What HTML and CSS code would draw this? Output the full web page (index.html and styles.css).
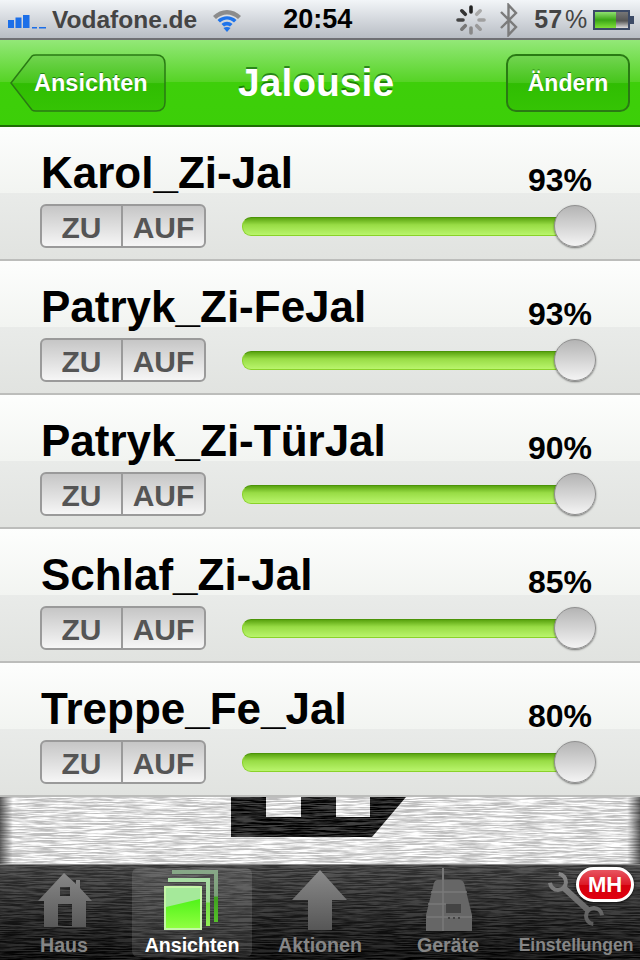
FILE: index.html
```html
<!DOCTYPE html>
<html>

<head>
  <meta charset="UTF-8">
  <meta name="viewport" content="width=device-width, initial-scale=1.0">
  <title>Jalousie</title>
  <link rel="stylesheet" href="styles.css">
</head>

<body>
  <svg class="defs" width="0" height="0">
    <defs>
      <filter id="grain" x="0" y="0" width="100%" height="100%" color-interpolation-filters="sRGB">
        <feTurbulence type="fractalNoise" baseFrequency="0.035 0.75" numOctaves="3" seed="7" />
        <feColorMatrix type="matrix" values="3.4 0 0 0 -1.2  3.4 0 0 0 -1.2  3.4 0 0 0 -1.2  0 0 0 0 1" />
      </filter>
      <linearGradient id="tabGray" gradientUnits="userSpaceOnUse" x1="0" y1="0" x2="0" y2="66">
        <stop offset="0" stop-color="#8f8f8f" />
        <stop offset="1" stop-color="#555" />
      </linearGradient>
      <linearGradient id="frontPage" x1="0" y1="0" x2="0" y2="1">
        <stop offset="0" stop-color="#38ee0a" />
        <stop offset="1" stop-color="#90ff40" />
      </linearGradient>
      <linearGradient id="backSide" x1="0" y1="0" x2="0" y2="1">
        <stop offset="0" stop-color="#88a888" />
        <stop offset="0.5" stop-color="#7a9f78" />
        <stop offset="0.52" stop-color="#3fa020" />
        <stop offset="1" stop-color="#55c02a" />
      </linearGradient>
      <linearGradient id="midSide" x1="0" y1="0" x2="0" y2="1">
        <stop offset="0" stop-color="#a8dba4" />
        <stop offset="0.5" stop-color="#a2dc98" />
        <stop offset="0.52" stop-color="#72e040" />
        <stop offset="1" stop-color="#90f055" />
      </linearGradient>
      <linearGradient id="batteryFill" x1="0" y1="0" x2="0" y2="1">
        <stop offset="0" stop-color="#8fe070" />
        <stop offset="0.5" stop-color="#3aa515" />
        <stop offset="1" stop-color="#7fe03a" />
      </linearGradient>
      <linearGradient id="batteryEmpty" x1="0" y1="0" x2="0" y2="1">
        <stop offset="0" stop-color="#777" />
        <stop offset="0.55" stop-color="#555" />
        <stop offset="1" stop-color="#ddd" />
      </linearGradient>
    </defs>
  </svg>

  <div id="statusBar">
    <svg class="signal" width="40" height="24" viewBox="0 0 40 24">
      <rect x="0" y="12" width="6" height="8" fill="#1c6fe8" />
      <rect x="7.5" y="9.5" width="6" height="10.5" fill="#1c6fe8" />
      <rect x="15" y="7" width="6.5" height="13" fill="#1c6fe8" />
      <rect x="24" y="19" width="5" height="1.5" fill="#1c6fe8" />
      <rect x="31" y="19" width="7" height="1.5" fill="#1c6fe8" />
    </svg>
    <span class="carrier">Vodafone.de</span>
    <svg class="wifi" width="32" height="26" viewBox="0 0 32 26">
      <path d="M2 9 C10 1 22 1 30 9 L27 12 C20 6 12 6 5 12 Z" fill="#8c8c8c" />
      <path d="M6.5 13 C12 8 20 8 25.5 13 L23 15.5 C18.5 11.5 13.5 11.5 9 15.5 Z" fill="#1f74ea" />
      <path d="M10.5 17 C14 14 18 14 21.5 17 L19 19.5 C17 18 15 18 13 19.5 Z" fill="#1f74ea" />
      <path d="M16 25 L12.5 21 C14.5 19.5 17.5 19.5 19.5 21 Z" fill="#1f74ea" />
    </svg>
    <span class="clock">20:54</span>
    <svg class="spinner" width="30" height="30" viewBox="-15 -15 30 30">
      <g stroke-width="3.6" stroke-linecap="round">
        <line x1="0" y1="-8" x2="0" y2="-13" stroke="#222" />
        <line x1="5.7" y1="-5.7" x2="9.2" y2="-9.2" stroke="#aaa" />
        <line x1="8" y1="0" x2="13" y2="0" stroke="#a0a0a0" />
        <line x1="5.7" y1="5.7" x2="9.2" y2="9.2" stroke="#999" />
        <line x1="0" y1="8" x2="0" y2="13" stroke="#888" />
        <line x1="-5.7" y1="5.7" x2="-9.2" y2="9.2" stroke="#777" />
        <line x1="-8" y1="0" x2="-13" y2="0" stroke="#444" />
        <line x1="-5.7" y1="-5.7" x2="-9.2" y2="-9.2" stroke="#333" />
      </g>
    </svg>
    <svg class="bluetooth" width="20" height="34" viewBox="0 0 20 34">
      <path d="M2 9 L17 24 L9.5 32 V2 L17 10 L2 25" fill="none" stroke="#7b7b7b" stroke-width="2.4" />
    </svg>
    <span class="battery-text">57<span class="percent">%</span></span>
    <svg class="battery" width="42" height="20" viewBox="0 0 42 20">
      <rect x="1" y="1" width="35" height="18" fill="#eee" stroke="#3c4a66" stroke-width="2" />
      <rect x="2" y="2" width="21" height="16" fill="url(#batteryFill)" />
      <rect x="23" y="2" width="12" height="16" fill="url(#batteryEmpty)" />
      <rect x="37" y="6" width="4" height="8" fill="#3c4a66" />
    </svg>
  </div>

  <div id="navBar">
    <a class="nav-back">
      <svg class="back-shape" width="156" height="58" viewBox="0 0 156 58">
        <defs>
          <linearGradient id="backFill" x1="0" y1="0" x2="0" y2="1">
            <stop offset="0" stop-color="#72d451" />
            <stop offset="0.5" stop-color="#45c51a" />
            <stop offset="0.51" stop-color="#30bd02" />
            <stop offset="1" stop-color="#35c404" />
          </linearGradient>
        </defs>
        <path d="M1 29 L22 2 Q23 1 26 1 H146 Q155 1 155 10 V48 Q155 57 146 57 H26 Q23 57 22 56 Z" fill="url(#backFill)" stroke="#2a7a14" stroke-width="1.5" />
      </svg>
      <span class="nav-back-label">Ansichten</span>
    </a>
    <h1 class="nav-title">Jalousie</h1>
    <a class="nav-button">Ändern</a>
  </div>

  <div class="blind-list">
    <div class="blind-row">
      <div class="blind-head">
        <span class="blind-name">Karol_Zi-Jal</span>
        <span class="blind-value">93%</span>
      </div>
      <div class="blind-controls">
        <div class="updown"><span class="updown-btn zu">ZU</span><span class="updown-btn auf">AUF</span></div>
        <div class="slider">
          <div class="slider-track"></div>
          <div class="slider-knob"></div>
        </div>
      </div>
    </div>
    <div class="blind-row">
      <div class="blind-head">
        <span class="blind-name">Patryk_Zi-FeJal</span>
        <span class="blind-value">93%</span>
      </div>
      <div class="blind-controls">
        <div class="updown"><span class="updown-btn zu">ZU</span><span class="updown-btn auf">AUF</span></div>
        <div class="slider">
          <div class="slider-track"></div>
          <div class="slider-knob"></div>
        </div>
      </div>
    </div>
    <div class="blind-row">
      <div class="blind-head">
        <span class="blind-name">Patryk_Zi-TürJal</span>
        <span class="blind-value">90%</span>
      </div>
      <div class="blind-controls">
        <div class="updown"><span class="updown-btn zu">ZU</span><span class="updown-btn auf">AUF</span></div>
        <div class="slider">
          <div class="slider-track"></div>
          <div class="slider-knob"></div>
        </div>
      </div>
    </div>
    <div class="blind-row">
      <div class="blind-head">
        <span class="blind-name">Schlaf_Zi-Jal</span>
        <span class="blind-value">85%</span>
      </div>
      <div class="blind-controls">
        <div class="updown"><span class="updown-btn zu">ZU</span><span class="updown-btn auf">AUF</span></div>
        <div class="slider">
          <div class="slider-track"></div>
          <div class="slider-knob"></div>
        </div>
      </div>
    </div>
    <div class="blind-row">
      <div class="blind-head">
        <span class="blind-name">Treppe_Fe_Jal</span>
        <span class="blind-value">80%</span>
      </div>
      <div class="blind-controls">
        <div class="updown"><span class="updown-btn zu">ZU</span><span class="updown-btn auf">AUF</span></div>
        <div class="slider">
          <div class="slider-track"></div>
          <div class="slider-knob"></div>
        </div>
      </div>
    </div>
  </div>

  <svg class="wall" width="640" height="67" viewBox="0 0 640 67">
    <defs>
      <linearGradient id="wallEdge">
        <stop offset="0" stop-color="#000" stop-opacity="0.6" />
        <stop offset="0.02" stop-color="#000" stop-opacity="0" />
        <stop offset="0.98" stop-color="#000" stop-opacity="0" />
        <stop offset="1" stop-color="#000" stop-opacity="0.6" />
      </linearGradient>
    </defs>
    <rect width="640" height="67" fill="#fff" />
    <path d="M231 0 H266 V20 H301 V0 H336 V20 H370 V0 H406 L372 40 H231 Z" fill="#000" />
    <rect width="640" height="67" filter="url(#grain)" opacity="0.25" />
    <rect width="640" height="67" fill="url(#wallEdge)" />
  </svg>

  <div id="tabBar">
    <svg class="tab-texture" width="640" height="96" viewBox="0 0 640 96">
      <defs>
        <linearGradient id="tabFade" x1="0" y1="0" x2="0" y2="1">
          <stop offset="0" stop-color="#3c3c3c" />
          <stop offset="1" stop-color="#000" />
        </linearGradient>
      </defs>
      <rect width="640" height="96" fill="url(#tabFade)" />
      <rect width="640" height="96" filter="url(#grain)" opacity="0.14" />
    </svg>
    <div class="tab">
      <svg class="tab-icon" width="128" height="66" viewBox="0 0 128 66">
        <path fill="url(#tabGray)" fill-rule="evenodd" d="M64 8 L76 19 V15 H80 V23 L92 36 H86 V62 H44 V36 H38 Z M60 22 V31 H70 V22 Z M58 39 V61 H72 V39 Z" />
      </svg>
      <span class="tab-label">Haus</span>
    </div>
    <div class="tab active">
      <svg class="tab-icon" width="128" height="66" viewBox="0 0 128 66">
        <path fill="url(#backSide)" d="M44 5 H90 V57 H86 V9 H44 Z" />
        <path fill="url(#midSide)" d="M40 13 H82 V61 H78 V17 H40 Z" />
        <rect x="36" y="21" width="38" height="44" fill="#c5f5a8" />
        <path fill="url(#frontPage)" d="M38 23 H72 V63 H38 Z" />
        <path fill="#a5e99a" d="M38 23 H72 V34 L38 42 Z" />
      </svg>
      <span class="tab-label">Ansichten</span>
    </div>
    <div class="tab">
      <svg class="tab-icon" width="128" height="66" viewBox="0 0 128 66">
        <path fill="url(#tabGray)" d="M64 5 L91 35 H76 V65 H52 V35 H36 Z" />
      </svg>
      <span class="tab-label">Aktionen</span>
    </div>
    <div class="tab">
      <svg class="tab-icon" width="128" height="66" viewBox="0 0 128 66">
        <rect x="58" y="3" width="2" height="14" fill="#777" />
        <path fill="#666" d="M53 15 H76 Q80 15 81 22 L88 50 V67 H42 V50 L49 22 Q50 15 53 15 Z" />
        <path d="M47 27 H83 M44 39 H62 M43 52 H88 M59 15 V67" stroke="#7a7a7a" stroke-width="1.5" fill="none" />
        <rect x="62" y="39" width="15" height="9" fill="#444" />
        <path d="M64 53 h2 M69 53 h2 M74 53 h2" stroke="#444" stroke-width="2" />
      </svg>
      <span class="tab-label">Geräte</span>
    </div>
    <div class="tab">
      <svg class="tab-icon" width="128" height="66" viewBox="0 0 128 66">
        <g fill="none" stroke="url(#tabGray)" stroke-width="4">
          <path d="M46.7 9 A8 8 0 1 1 38 17.7" />
          <path d="M81.3 59 A8 8 0 1 1 90 50.3" />
          <path d="M52 23 L76 45" stroke-width="6" />
        </g>
      </svg>
      <span class="tab-label small">Einstellungen</span>
      <span class="tab-badge">MH</span>
    </div>
  </div>
</body>

</html>
```

FILE: styles.css
```css
* {
  box-sizing: border-box;
}

body {
  font-family: 'Liberation Sans', Arial, sans-serif;
  margin: 0;
  padding: 0;
  width: 640px;
  height: 960px;
  overflow: hidden;
  background-color: #000;
}

.defs {
  position: absolute;
}

/* status bar */
#statusBar {
  display: flex;
  align-items: center;
  height: 40px;
  padding: 1px 0 0 8px;
  background: linear-gradient(#f2f5f8, #b8bdc4);
  border-bottom: 2px solid #6f7074;
}

.signal {
  flex: none;
}

.carrier {
  margin-left: 4px;
  font-size: 24.5px;
  font-weight: bold;
  color: #444;
}

.wifi {
  flex: none;
  margin-left: 14px;
}

.clock {
  margin-left: 40px;
  font-size: 27px;
  font-weight: bold;
  color: #000;
}

.spinner {
  flex: none;
  margin-left: 104px;
}

.bluetooth {
  flex: none;
  margin-left: 13px;
}

.battery-text {
  margin-left: 15px;
  font-size: 25px;
  font-weight: bold;
  color: #444;
}

.percent {
  margin-left: 3px;
  font-weight: normal;
}

.battery {
  flex: none;
  margin-left: 6px;
}

/* nav bar */
#navBar {
  display: flex;
  align-items: center;
  height: 87px;
  padding: 0 10px;
  background: linear-gradient(#93e878, #55d324 50%, #3ecf0a 50%, #3ccf08);
  border-bottom: 2px solid #1f6d05;
}

.nav-back {
  position: relative;
  display: flex;
  align-items: center;
  width: 156px;
  height: 58px;
  padding: 2px 0 0 24px;
}

.back-shape {
  position: absolute;
  left: 0;
  top: 0;
}

.nav-back-label {
  position: relative;
  font-size: 23.5px;
  font-weight: bold;
  color: #fff;
  text-shadow: 0 -1px 0 rgba(0, 80, 0, 0.6);
}

.nav-title {
  margin: 0 0 0 72px;
  font-size: 39px;
  font-weight: bold;
  color: #fff;
  text-shadow: 0 -2px 0 rgba(0, 80, 0, 0.6);
}

.nav-button {
  display: flex;
  align-items: center;
  justify-content: center;
  width: 124px;
  height: 58px;
  margin-left: auto;
  padding-top: 2px;
  border: 2px solid #2a7a14;
  border-radius: 10px;
  background: linear-gradient(#72d451, #45c51a 50%, #30bd02 51%, #35c404);
  font-size: 23px;
  font-weight: bold;
  color: #fff;
  text-shadow: 0 -1px 0 rgba(0, 80, 0, 0.6);
}

/* list */
.blind-row {
  height: 134px;
  padding: 24px 44px 0 40px;
  background: linear-gradient(#fdfefd, #f2f4f1 66px, #e9ebe9 66px, #e1e3e0 132px);
  border-bottom: 2px solid #bcbdbb;
}

.blind-head {
  display: flex;
  justify-content: space-between;
  height: 44px;
}

.blind-name {
  margin-left: 1px;
  font-size: 44px;
  line-height: 44px;
  font-weight: bold;
  color: #000;
}

.blind-value {
  margin: 13px 4px 0 0;
  font-size: 32px;
  line-height: 32px;
  font-weight: bold;
  color: #000;
}

.blind-controls {
  display: flex;
  align-items: center;
  margin-top: 9px;
  height: 44px;
}

.updown {
  display: flex;
  flex: none;
  width: 166px;
  height: 44px;
  border: 2px solid #9a9a9a;
  border-radius: 6px;
  background: linear-gradient(#c6c6c6, #f6f6f6);
  font-size: 30px;
  font-weight: bold;
  color: #555;
}

.updown-btn {
  display: flex;
  align-items: center;
  justify-content: center;
  padding-top: 3px;
}

.updown-btn.zu {
  width: 81px;
  border-right: 2px solid #9a9a9a;
}

.updown-btn.auf {
  flex: 1;
}

.slider {
  position: relative;
  flex: 1;
  margin: 0 0 0 36px;
  height: 44px;
  display: flex;
  align-items: center;
}

.slider-track {
  flex: 1;
  height: 19px;
  margin-right: 20px;
  border-radius: 9px 0 0 9px;
  border: 1px solid #8ad22a;
  border-top-color: #4b9408;
  background: linear-gradient(#5aa410, #98dc45 40%, #b9f56c);
}

.slider-knob {
  position: absolute;
  right: 0;
  top: 1px;
  width: 42px;
  height: 42px;
  border-radius: 50%;
  border: 1px solid #8f8f8f;
  background: linear-gradient(#b4b4b4, #f4f4f4);
  box-shadow: 0 1px 2px rgba(0, 0, 0, 0.5);
}

/* backdrop between list and tabs */
.wall {
  display: block;
}

/* tab bar */
#tabBar {
  position: relative;
  display: grid;
  grid-template-columns: repeat(5, 128px);
  height: 96px;
  border-top: 1px solid #8a8a8a;
}

.tab-texture {
  position: absolute;
  left: 0;
  top: 0;
}

.tab {
  position: relative;
  display: flex;
  flex-direction: column;
  align-items: center;
}

.tab.active::before {
  content: "";
  position: absolute;
  left: 4px;
  right: 4px;
  top: 3px;
  bottom: 3px;
  border-radius: 6px;
  background-color: rgba(255, 255, 255, 0.12);
}

.tab-icon {
  position: relative;
  display: block;
}

.tab-label {
  position: relative;
  margin-top: 2px;
  font-size: 19.6px;
  line-height: 24px;
  font-weight: bold;
  color: #868686;
}

.tab-label.small {
  font-size: 17.5px;
}

.tab.active .tab-label {
  color: #fff;
}

.tab-badge {
  position: absolute;
  right: 6px;
  top: 2px;
  width: 58px;
  height: 35px;
  display: flex;
  align-items: center;
  justify-content: center;
  border: 3px solid #fff;
  border-radius: 18px;
  background: linear-gradient(#e85560, #dd1a28 50%, #d4000c 51%, #e00010);
  font-size: 22px;
  font-weight: bold;
  color: #fff;
  box-shadow: 0 1px 3px rgba(0, 0, 0, 0.7);
}
```
